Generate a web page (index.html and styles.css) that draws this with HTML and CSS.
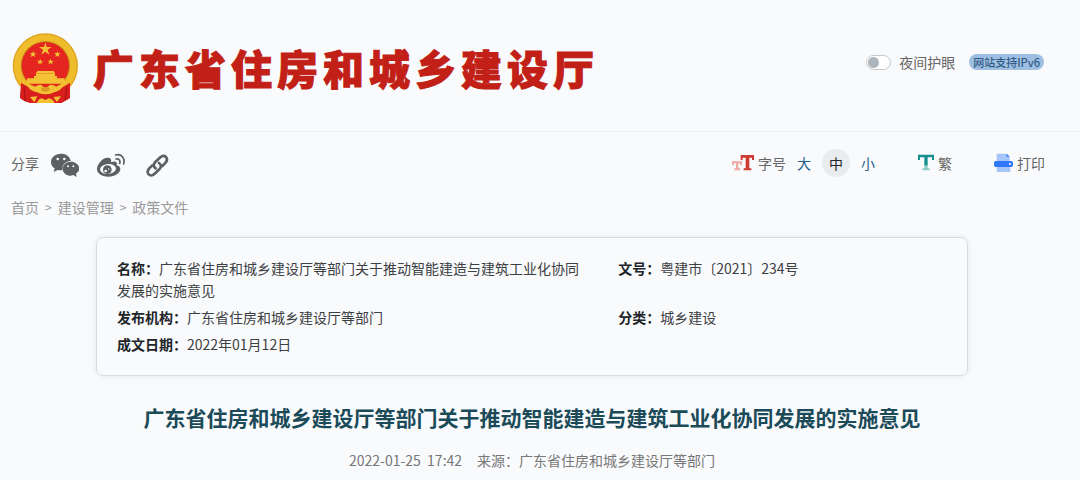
FILE: index.html
```html
<!DOCTYPE html>
<html lang="zh-CN">
<head>
  <meta charset="UTF-8" />
  <meta name="viewport" content="width=device-width, initial-scale=1" />
  <title>广东省住房和城乡建设厅</title>
  <link rel="stylesheet" href="styles.css">
</head>
<body>
  <header class="header">
    <a href="#" class="logo">
      <svg class="emblem" viewBox="33 36 204 222" aria-hidden="true">
        <path fill="#c4161c" d="M64 190L60 234L74 244L92 249L103 240L114 249H160L170 241L183 249L210 234L208 190Z" />
        <circle cx="136" cy="138" r="98" fill="#dda522" />
        <circle cx="136" cy="138" r="94" fill="#efbd2c" />
        <circle cx="136" cy="137" r="74" fill="#c98a1c" />
        <circle cx="136" cy="137" r="71" fill="#e52620" />
        <path fill="#d81f1e" d="M63 188L94 206Q136 240 180 206L210 188V234L184 249H90L61 234Z" />
        <path fill="none" stroke="#a30f16" stroke-width="3" d="M72 200L76 242M200 200L196 240" />
        <g fill="#f3c234">
          <path d="M136 67L140 81H155L143 89L148 104L136 95L124 104L129 89L117 81H132Z" />
          <path d="M100 93L102 100H109L103 104L106 111L99 107L92 111L95 104L90 99H97Z" />
          <path d="M173 94L175 100H182L176 104L179 111L172 107L166 111L168 104L163 99H170Z" />
          <path d="M121 117L123 123H130L124 127L126 133L120 129L114 133L116 126L111 122H118Z" />
          <path d="M152 117L155 123H161L156 127L158 133L152 129L145 133L148 126L143 122H149Z" />
          <path d="M112 153H161L166 161H107ZM108 162H165V168H171V175H102V168H108ZM82 175H194V191H78Z" />
          <path d="M82 194Q98 194 104 200L114 196Q122 192 128 199Q136 206 145 199Q152 192 160 196L170 200Q176 194 190 194Q184 214 158 216Q136 228 114 216Q88 214 82 194Z" />
          <path d="M90 231L112 229L103 247ZM160 231L183 229L171 246ZM110 249Q116 236 126 235L136 240L146 235Q158 236 164 249Z" />
        </g>
        <ellipse cx="136" cy="208" rx="13" ry="7" fill="#d99a20" />
      </svg>
      <span class="site-name">广东省住房和城乡建设厅</span>
    </a>
    <div class="header-tools">
      <label class="night-mode"><input type="checkbox" class="switch" />夜间护眼</label>
      <span class="badge">网站支持IPv6</span>
    </div>
  </header>

  <main class="page">
    <div class="toolbar">
      <div class="share">
        <span>分享</span>
        <a href="#" aria-label="微信">
          <svg class="share-icon" viewBox="152 28 84 84">
            <path fill="#5d5f61" d="M182 42C164 42 152 53 152 67C152 76 156 82 163 86L160 97L172 91Q180 93 187 91C184 76 195 65 211 64C209 50 197 42 182 42Z" />
            <path fill="#5d5f61" d="M211 66C198 66 187 75 187 87C187 100 199 108 211 108L219 106L229 112L227 102C233 98 237 93 237 87C237 75 225 66 211 66Z" />
            <g fill="#f9fafc">
              <circle cx="172" cy="58" r="4" /><circle cx="192" cy="58" r="4" />
              <circle cx="203" cy="80" r="3" /><circle cx="219" cy="80" r="3" />
            </g>
          </svg>
        </a>
        <a href="#" aria-label="微博">
          <svg class="share-icon" viewBox="291 28 84 84">
            <path fill="#5d5f61" d="M322 54C308 54 291 74 291 88C291 103 308 111 325 111C346 111 361 99 361 88C361 81 355 78 350 77C353 69 349 62 333 68C335 60 333 54 322 54Z" />
            <ellipse cx="324" cy="88" rx="24" ry="15" fill="#f9fafc" transform="rotate(-6 324 88)" />
            <circle cx="322" cy="90" r="13" fill="#5d5f61" />
            <circle cx="317" cy="94" r="4" fill="#f9fafc" />
            <circle cx="326" cy="88" r="2" fill="#f9fafc" />
            <path fill="none" stroke="#5d5f61" stroke-width="5" stroke-linecap="round" d="M347 46C364 41 376 56 371 73M348 58C357 56 362 63 359 71" />
          </svg>
        </a>
        <a href="#" aria-label="复制链接">
          <svg class="share-icon" viewBox="429 28 84 84">
            <g fill="none" stroke="#5d5f61" stroke-width="8" stroke-linecap="round">
              <path d="M467 86C459 80 460 73 466 67L481 53C487 47 494 48 498 52C503 58 501 64 497 69L487 79" />
              <path d="M477 70C485 76 484 83 478 89L463 103C457 109 450 108 446 104C441 98 443 92 447 87L457 77" />
            </g>
          </svg>
        </a>
      </div>

      <div class="actions">
        <div class="font-size">
          <svg class="size-icon" viewBox="0 0 66 60" aria-hidden="true">
            <path fill="#cf3a32" d="M26 6H66V21H60V14H52V46H58V52H35V46H41V14H32V21H26Z" />
            <path fill="#eda7a5" d="M0 25H30V37H25V31H19V46H24V52H7V46H12V31H5V37H0Z" />
          </svg>
          <span>字号</span>
          <button type="button" class="size-btn">大</button>
          <button type="button" class="size-btn active">中</button>
          <button type="button" class="size-btn">小</button>
        </div>
        <button type="button" class="action-btn trad">
          <svg class="trad-icon" viewBox="0 0 48 60" aria-hidden="true">
            <path fill="#159090" d="M0 5H48V21H42V13H29V38H19V13H6V21H0Z" />
            <path fill="#8fcac9" d="M19 38H29V46H35V52H13V46H19Z" />
          </svg>
          繁
        </button>
        <button type="button" class="action-btn print">
          <svg class="print-icon" viewBox="0 0 57 60" aria-hidden="true">
            <path fill="#a5c5fb" d="M8 2H38L47 11V26H8ZM8 42H49V53Q49 57 45 57H12Q8 57 8 53Z" />
            <path fill="#3178f6" d="M38 2L47 11H38ZM5 24H52Q57 24 57 29V37Q57 42 52 42H5Q0 42 0 37V29Q0 24 5 24Z" />
            <circle cx="48" cy="33" r="3" fill="#fff" />
          </svg>
          打印
        </button>
      </div>
    </div>

    <nav class="breadcrumb">
      <a href="#">首页</a><span>&gt;</span><a href="#">建设管理</a><span>&gt;</span><a href="#">政策文件</a>
    </nav>

    <article class="article">
      <dl class="info">
        <div class="info-item"><dt>名称：</dt><dd>广东省住房和城乡建设厅等部门关于推动智能建造与建筑工业化协同发展的实施意见</dd></div>
        <div class="info-item"><dt>文号：</dt><dd>粤建市〔2021〕234号</dd></div>
        <div class="info-item"><dt>发布机构：</dt><dd>广东省住房和城乡建设厅等部门</dd></div>
        <div class="info-item"><dt>分类：</dt><dd>城乡建设</dd></div>
        <div class="info-item"><dt>成文日期：</dt><dd>2022年01月12日</dd></div>
      </dl>
      <h1 class="title">广东省住房和城乡建设厅等部门关于推动智能建造与建筑工业化协同发展的实施意见</h1>
      <p class="meta"><time datetime="2022-01-25T17:42">2022-01-25&nbsp; 17:42</time><span>来源：广东省住房和城乡建设厅等部门</span></p>
    </article>
  </main>
</body>
</html>
```
FILE: styles.css
```css
* {
  box-sizing: border-box;
}

body {
  margin: 0;
  background: #f9fafc;
  color: #666;
  font-family: "Noto Sans CJK SC", "Microsoft YaHei", sans-serif;
  font-size: 14px;
  line-height: 22px;
}

a {
  color: inherit;
  text-decoration: none;
}

button {
  padding: 0;
  border: none;
  background: none;
  color: inherit;
  font: inherit;
  cursor: pointer;
}

svg {
  display: block;
  flex: none;
}

/* header */
.header {
  display: flex;
  justify-content: space-between;
  align-items: flex-start;
  padding: 32px 36px 25px 11px;
  border-bottom: 1px solid #eceef0;
}

.logo {
  display: flex;
  align-items: center;
  gap: 14px;
}

.emblem {
  width: 68px;
  height: 74px;
}

.site-name {
  padding-bottom: 4px;
  color: #c21f17;
  font-size: 41px;
  font-weight: 900;
  line-height: 60px;
  letter-spacing: 5px;
  -webkit-text-stroke: 1px #c21f17;
}

.header-tools {
  display: flex;
  align-items: center;
  gap: 14px;
  margin-top: 19px;
}

.night-mode {
  display: flex;
  align-items: center;
  gap: 8px;
  cursor: pointer;
}

.switch {
  appearance: none;
  width: 25px;
  height: 15px;
  margin: 0;
  padding: 1px;
  border: 1px solid #c3c8cc;
  border-radius: 8px;
  background: #fff;
}

.switch::before {
  content: "";
  display: block;
  width: 11px;
  height: 11px;
  border-radius: 50%;
  background: #adb5bd;
}

.switch:checked::before {
  margin-left: auto;
}

.badge {
  padding: 0 4px;
  border-radius: 8px;
  background: #9fbfe2;
  color: #315b85;
  font-size: 11px;
  font-weight: 500;
  line-height: 16px;
}

/* toolbar */
.page {
  padding: 0 27px 0 11px;
}

.toolbar {
  display: flex;
  justify-content: space-between;
  align-items: center;
  padding: 17px 8px 0 0;
}

.share {
  display: flex;
  align-items: center;
  gap: 18px;
}

.share span {
  margin-right: -6px;
}

.share-icon {
  width: 28px;
  height: 28px;
}

.actions,
.font-size,
.action-btn {
  display: flex;
  align-items: center;
}

.font-size {
  gap: 4px;
}

.size-icon {
  width: 22px;
  height: 20px;
}

.size-btn {
  width: 28px;
  height: 28px;
  border-radius: 50%;
  color: #1f5f8b;
}

.size-btn.active {
  background: #e9ecef;
  color: #212529;
}

.action-btn {
  gap: 4px;
}

.trad {
  margin-left: 36px;
}

.print {
  margin-left: 42px;
}

.trad-icon {
  width: 16px;
  height: 20px;
}

.print-icon {
  width: 19px;
  height: 20px;
}

.breadcrumb {
  display: flex;
  gap: 6px;
  margin-top: 19px;
  color: #999;
}

.breadcrumb span {
  font-size: 12px;
}

/* article */
.article {
  margin: 19px 85px 0;
}

.info {
  display: grid;
  grid-template-columns: 3fr 2fr;
  gap: 5px 8px;
  margin: 0;
  padding: 19px 20px 20px;
  border: 1px solid #d9dcdf;
  border-radius: 7px;
  box-shadow: 0 0 6px rgba(0, 0, 0, 0.08);
  color: #3c4043;
}

.info-item {
  padding-right: 20px;
}

.info dt,
.info dd {
  display: inline;
  margin: 0;
}

.info dt {
  color: #212529;
  font-weight: 700;
}

.title {
  margin: 25px 0 0;
  color: #1b4a59;
  font-size: 21px;
  font-weight: 700;
  line-height: 32px;
  text-align: center;
}

.meta {
  display: flex;
  justify-content: center;
  gap: 15px;
  margin: 16px 0 0;
  color: #777;
}
```
